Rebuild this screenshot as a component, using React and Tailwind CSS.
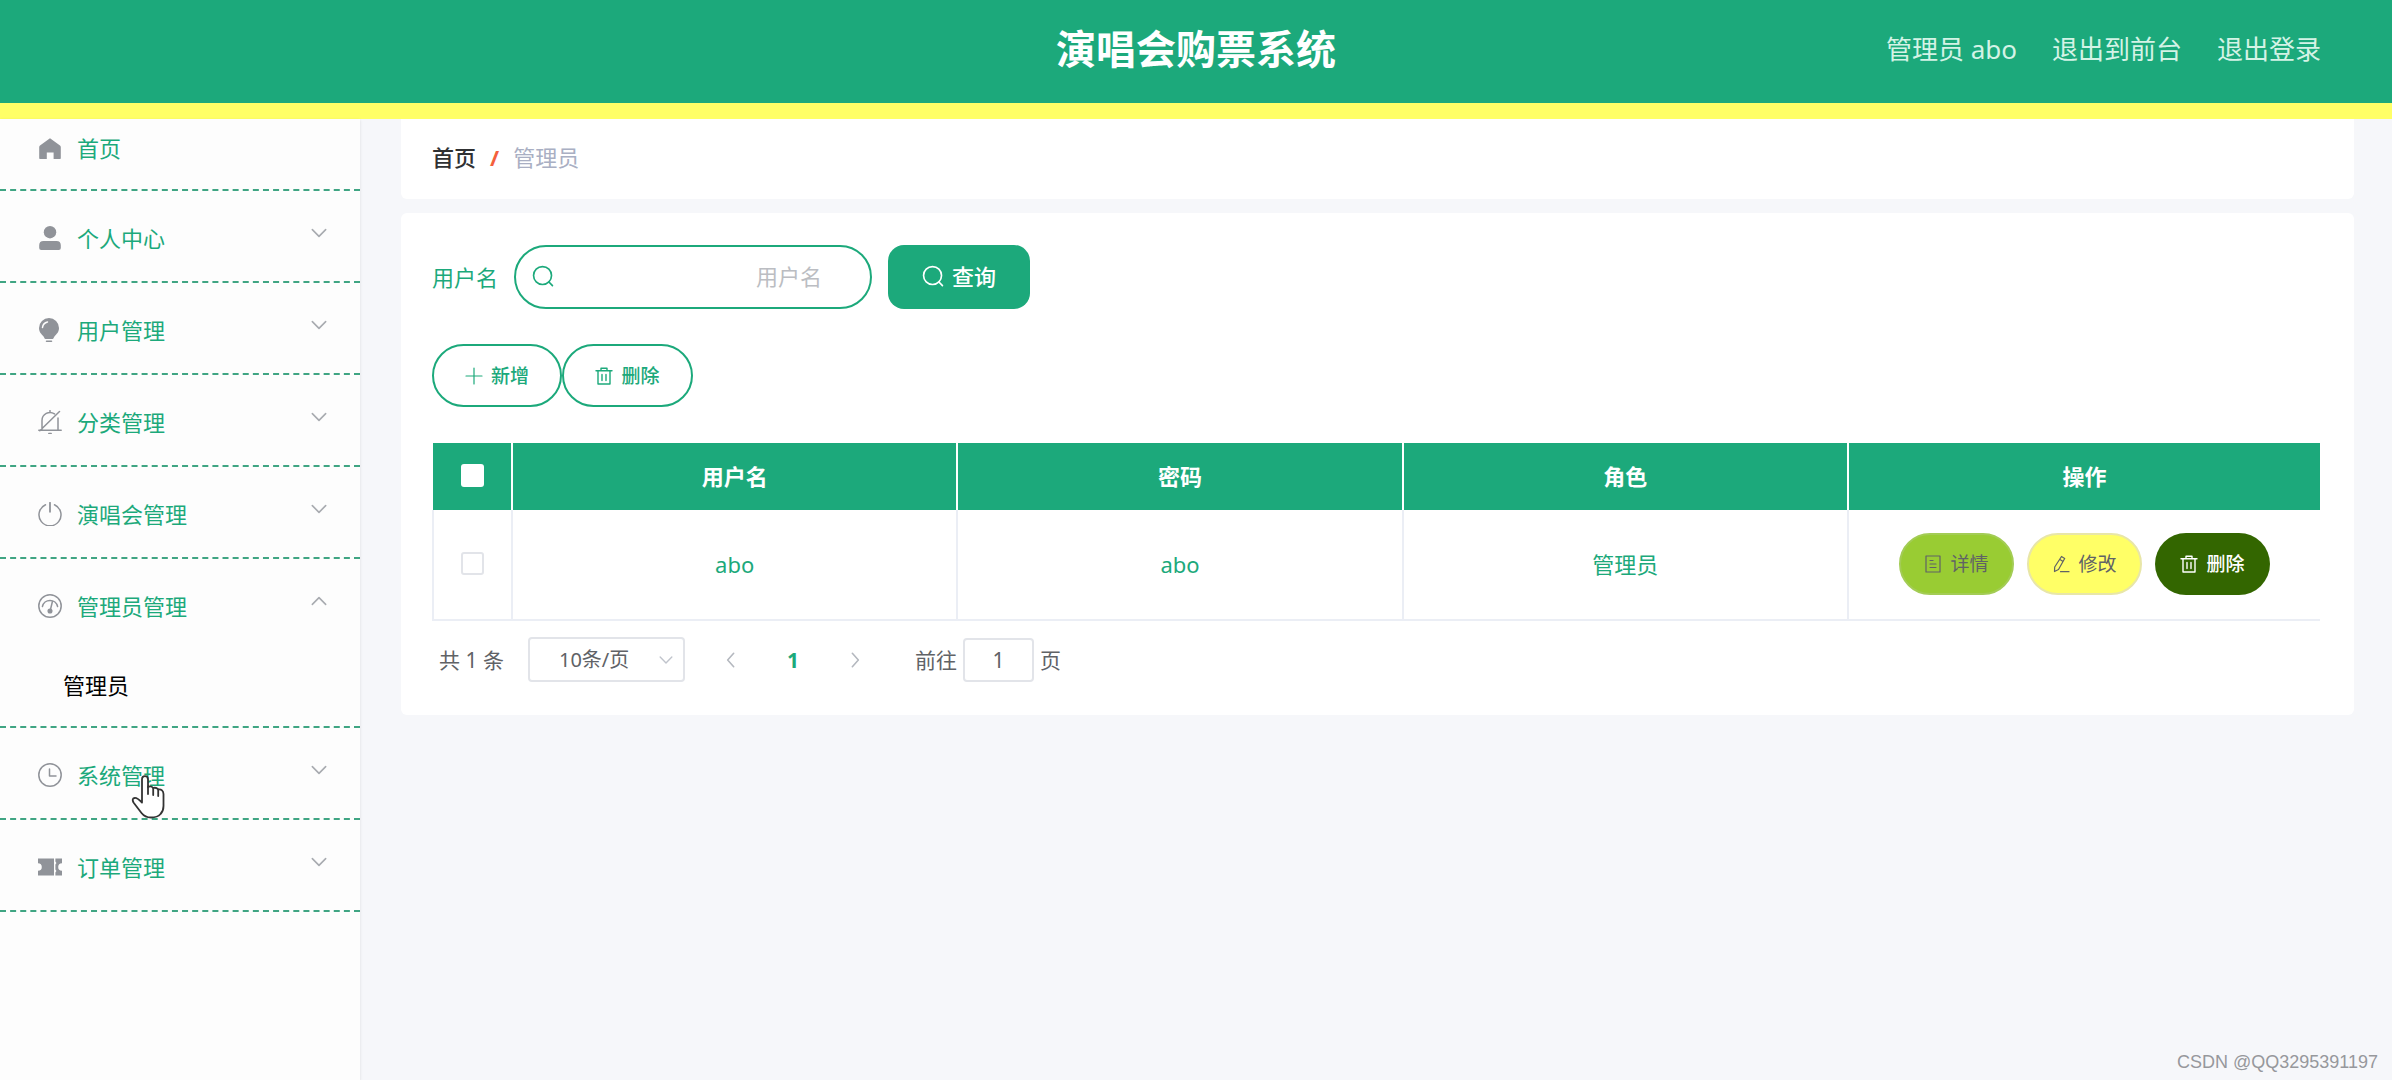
import { useState } from "react";

const stroke = {
  fill: "none",
  stroke: "currentColor",
  strokeLinecap: "round",
  strokeLinejoin: "round",
};

function HomeIcon() {
  return (
    <svg viewBox="0 0 24 24" className="w-6 h-6 shrink-0" fill="currentColor">
      <path d="M12 2.2 22 9.6q.8.6.8 1.6v11q0 .8-.8.8h-6.4v-6.400H8.800V23H2q-.8 0-.8-.8v-11q0-1 .8-1.600Z" />
    </svg>
  );
}

function UserIcon() {
  return (
    <svg viewBox="0 0 24 24" className="w-6 h-6 shrink-0" fill="currentColor">
      <circle cx="12" cy="6.2" r="6.2" />
      <path d="M5.5 15h13q4.300 0 4.300 4.300v2.700q0 2-2 2H3.200q-2 0-2-2v-2.700q0-4.300 4.300-4.300Z" />
    </svg>
  );
}

function BulbIcon() {
  return (
    <svg viewBox="0 0 24 24" className="w-6 h-6 shrink-0">
      <path
        fill="currentColor"
        d="M11 0a10 10 0 0 1 10 10c0 4.200-2.600 6.200-4.400 8.300-1 1.200-.9 2.700-2.100 2.700h-7c-1.200 0-1.100-1.500-2.100-2.700C3.600 16.200 1 14.200 1 10A10 10 0 0 1 11 0Z"
      />
      <path d="M4.500 9.500a6.500 6.500 0 0 1 5-5.500" {...stroke} stroke="#fdfdfd" strokeWidth="1.5" />
      <path d="M8.500 23.200h5" {...stroke} strokeWidth="1.5" />
    </svg>
  );
}

function BellOffIcon() {
  return (
    <svg viewBox="0 0 24 24" className="w-6 h-6 shrink-0" {...stroke} strokeWidth="1.5">
      <path d="M4 19V10.500a8 8 0 0 1 12.500-6.600M20 8V20M.8 20.200h22.400M1.800 20.800 21.500 1.500M12 .6v1.400M10.800 23.400h2.400" />
    </svg>
  );
}

function PowerIcon() {
  return (
    <svg viewBox="0 0 24 24" className="w-6 h-6 shrink-0" {...stroke} strokeWidth="1.5">
      <path d="M7.500 2.800A11 11 0 1 0 16.500 2.800" />
      <path d="M12 .8v9" strokeWidth="1.8" />
    </svg>
  );
}

function GaugeIcon() {
  return (
    <svg viewBox="0 0 24 24" className="w-6 h-6 shrink-0" {...stroke} strokeWidth="1.5">
      <circle cx="12" cy="12" r="11.2" />
      <path d="M4.400 12.500a7.800 7.800 0 0 1 15.200 0M12.600 15l1.700-7" />
      <circle cx="12" cy="17" r="1.800" fill="currentColor" />
    </svg>
  );
}

function ClockIcon() {
  return (
    <svg viewBox="0 0 24 24" className="w-6 h-6 shrink-0" {...stroke} strokeWidth="1.5">
      <circle cx="12" cy="12" r="11.2" />
      <path d="M11.500 6v7h6.500" />
    </svg>
  );
}

function TicketIcon() {
  return (
    <svg viewBox="0 0 24 24" className="w-6 h-6 shrink-0" fill="currentColor">
      <path d="M0 3.500h16v17H0v-4.700a3.800 3.800 0 0 0 0-7.600Z" />
      <path d="M17.400 3.500H24v4.700a3.800 3.800 0 0 0 0 7.600v4.700h-6.600v-3l1-1.500-1-1.500v-5l1-1.500-1-1.500Z" />
    </svg>
  );
}

function Chevron({ className, d = "m2 7 10 10L22 7" }) {
  return (
    <svg viewBox="0 0 24 24" className={className} {...stroke} strokeWidth="2.4">
      <path d={d} />
    </svg>
  );
}

function SearchIcon() {
  return (
    <svg viewBox="0 0 24 24" className="w-[22px] h-[22px] shrink-0" {...stroke} strokeWidth="1.8">
      <circle cx="11.5" cy="11.5" r="9.8" />
      <path d="m18.500 18.500 3.800 4" />
    </svg>
  );
}

function PlusIcon() {
  return (
    <svg viewBox="0 0 18 18" className="w-[18px] h-[18px] shrink-0" {...stroke} strokeWidth="1.2">
      <path d="M9 1v16M1 9h16" />
    </svg>
  );
}

function TrashIcon() {
  return (
    <svg viewBox="0 0 18 18" className="w-[18px] h-[18px] shrink-0" {...stroke} strokeWidth="1.4">
      <path d="M1 3.800h16M6 3.500V1.200h6v2.300M3 4v13h12V4M7 7.500v6M11 7.500v6" />
    </svg>
  );
}

function DetailIcon() {
  return (
    <svg viewBox="0 0 18 18" className="w-[18px] h-[18px] shrink-0" {...stroke} strokeWidth="1.2">
      <path d="M2 1h14v16H2ZM6 5.500h3M6 9h6M6 12.500h6" />
    </svg>
  );
}

function EditIcon() {
  return (
    <svg viewBox="0 0 18 18" className="w-[18px] h-[18px] shrink-0" {...stroke} strokeWidth="1.2">
      <path d="m9.500 1.500 3.200 2L6.500 14.500l-4 2 .2-4.500ZM8 4.500l3 2M8.500 16.700H17" />
    </svg>
  );
}

function HandCursor() {
  return (
    <svg
      viewBox="0 0 34 44"
      className="absolute left-[131px] top-[656px] w-[34px] h-[44px] pointer-events-none"
      fill="#fff"
      stroke="#333"
      strokeWidth="1.8"
      strokeLinejoin="round"
      strokeLinecap="round"
    >
      <path d="M11 26V4.500Q11 1.200 14 1.200T17 4.500V12q3-1.500 5.200 1 3-1 5 1.500 5-.5 5.300 4.500V31q0 5-3 8-3 3.500-9.500 3.500-6 0-9.500-4.500L2.500 27.500Q.5 23.500 3.500 23 6 22.500 11 27.500Z" />
      <path d="M17 12v7M22.200 13v7M27.200 14.500V21" fill="none" />
    </svg>
  );
}

const menu = [
  { name: "个人中心", icon: UserIcon },
  { name: "用户管理", icon: BulbIcon },
  { name: "分类管理", icon: BellOffIcon },
  { name: "演唱会管理", icon: PowerIcon },
  { name: "管理员管理", icon: GaugeIcon, children: ["管理员"] },
  { name: "系统管理", icon: ClockIcon },
  { name: "订单管理", icon: TicketIcon },
];

function Header() {
  return (
    <header className="grid grid-cols-[1fr_auto_1fr] h-[119px] pb-1.5 items-center bg-[#1ca97b] border-b-[16px] border-[#ffff66]">
      <h1 className="col-start-2 text-[40px] leading-[48px] font-bold text-white">
        演唱会购票系统
      </h1>
      <nav className="flex justify-end gap-[35px] pr-[71px] text-[26px] leading-8 text-[#d4f3e6]">
        <span>管理员 abo</span>
        <a href="#front">退出到前台</a>
        <a href="#logout">退出登录</a>
      </nav>
    </header>
  );
}

function Sidebar() {
  const [open, setOpen] = useState("管理员管理");

  return (
    <aside className="relative w-[360px] shrink-0 bg-[#fdfdfd] shadow-sm text-[22px] leading-8">
      <ul>
        <li className="border-b-2 border-dashed border-[#3fa583]">
          <a href="#home" className="flex items-center h-[70px] pb-3 pl-[38px] gap-[15px] text-[#909399]">
            <HomeIcon />
            <span className="text-[#1ca97b]">首页</span>
          </a>
        </li>
        {menu.map(({ name, icon: Icon, children }) => (
          <li key={name} className="border-b-2 border-dashed border-[#3fa583]">
            <button
              type="button"
              onClick={() => setOpen(open === name ? "" : name)}
              className="flex items-center w-full h-[90px] pt-[3px] pl-[38px] pr-[33px] gap-[15px] text-[#909399]"
            >
              <Icon />
              <span className="text-[#1ca97b]">{name}</span>
              <Chevron
                className="ml-auto mb-2.5 w-4 h-4 text-[#a8abb0]"
                d={open === name && children ? "m2 17 10-10 10 10" : "m2 7 10 10L22 7"}
              />
            </button>
            {open === name &&
              children?.map((child) => (
                <a key={child} href="#admin" className="flex items-center h-[77px] pb-1.5 pl-[63px] text-black">
                  {child}
                </a>
              ))}
          </li>
        ))}
      </ul>
      <HandCursor />
    </aside>
  );
}

function Pagination() {
  return (
    <div className="flex items-center mt-4 pl-[7px] text-[21px] leading-7 text-[#606266]">
      <span>共 1 条</span>
      <div className="relative ml-6">
        <select
          aria-label="每页条数"
          className="appearance-none w-[157px] h-[45px] pl-[29px] text-[20px] bg-white border-2 border-[#e2e4e9] rounded"
        >
          <option>10条/页</option>
        </select>
        <Chevron className="absolute right-3 top-4 w-3.5 h-3.5 text-[#c0c4cc] pointer-events-none" />
      </div>
      <button type="button" aria-label="上一页" className="ml-[38px] text-[#b4b8bf]">
        <Chevron className="w-4 h-4" d="M16 2 7 12l9 10" />
      </button>
      <button type="button" className="ml-[46px] w-4 font-bold text-[#1ca97b]">
        1
      </button>
      <button type="button" aria-label="下一页" className="ml-[46px] text-[#b4b8bf]">
        <Chevron className="w-4 h-4" d="m8 2 9 10-9 10" />
      </button>
      <label className="flex items-center gap-[6px] ml-[52px]">
        前往
        <input
          type="text"
          defaultValue="1"
          className="w-[71px] h-[44px] text-center bg-white border-2 border-[#e2e4e9] rounded"
        />
        页
      </label>
    </div>
  );
}

const pill = "flex items-center justify-center gap-2 rounded-full text-[19px] leading-6";

function UserTable() {
  const th = "pb-0.5 border-r-2 border-white last:border-r-0";
  const td = "pb-0.5 border-r-2 border-[#ebeef5] last:border-r-0";

  return (
    <table className="w-full mt-9 table-fixed text-[22px] leading-8 text-center text-[#1ca97b]">
      <colgroup>
        <col className="w-[79px]" />
        <col />
        <col />
        <col />
        <col className="w-[472px]" />
      </colgroup>
      <thead>
        <tr className="h-[67px] bg-[#1ca97b] text-white">
          <th className={th}>
            <input
              type="checkbox"
              aria-label="全选"
              className="block mx-auto appearance-none w-[23px] h-[23px] bg-white rounded-[3px]"
            />
          </th>
          <th className={th}>用户名</th>
          <th className={th}>密码</th>
          <th className={th}>角色</th>
          <th className={th}>操作</th>
        </tr>
      </thead>
      <tbody>
        <tr className="h-[110px] border-b-2 border-l-2 border-[#ebeef5]">
          <td className={td}>
            <input
              type="checkbox"
              aria-label="选择 abo"
              className="block mx-auto appearance-none w-[23px] h-[23px] bg-white border-2 border-[#e2e4e9] rounded-[3px]"
            />
          </td>
          <td className={td}>abo</td>
          <td className={td}>abo</td>
          <td className={td}>管理员</td>
          <td className={td}>
            <div className="flex justify-center gap-[13px]">
              <button type="button" className={`${pill} w-[115px] h-[62px] bg-[#99cc33] border-2 border-[#a3cc55] text-[#606266]`}>
                <DetailIcon />
                详情
              </button>
              <button type="button" className={`${pill} w-[115px] h-[62px] bg-[#ffff66] border-2 border-[#e8e6a8] text-[#606266]`}>
                <EditIcon />
                修改
              </button>
              <button type="button" className={`${pill} w-[115px] h-[62px] bg-[#336600] font-medium text-white`}>
                <TrashIcon />
                删除
              </button>
            </div>
          </td>
        </tr>
      </tbody>
    </table>
  );
}

function App() {
  return (
    <div className="relative flex flex-col min-h-screen bg-[#f6f7fa] font-['Noto_Sans','Noto_Sans_CJK_SC',sans-serif]">
      <Header />
      <div className="flex flex-1">
        <Sidebar />
        <main className="flex-1 min-w-0 pl-[41px] pr-[38px]">
          <nav className="flex items-center h-20 pb-1 pl-[31px] gap-3.5 bg-white rounded-b-md text-[22px] leading-8">
            <a href="#home" className="font-medium text-[#303133]">
              首页
            </a>
            <span className="font-bold text-[#f4603c]">/</span>
            <span className="text-[#a9afc3]">管理员</span>
          </nav>

          <section className="mt-3.5 pt-8 pb-[33px] pl-[31px] pr-[34px] bg-white rounded-md">
            <form className="flex items-center gap-4 text-[22px] leading-8" onSubmit={(e) => e.preventDefault()}>
              <label htmlFor="username" className="text-[#1ca97b]">
                用户名
              </label>
              <div className="flex items-center w-[358px] h-16 pl-4 pb-0.5 pr-[48px] border-2 border-[#1ca97b] rounded-full text-[#1ca97b]">
                <SearchIcon />
                <input
                  id="username"
                  type="text"
                  placeholder="用户名"
                  className="flex-1 min-w-0 text-right outline-none placeholder:text-[#bbbdc2]"
                />
              </div>
              <button
                type="submit"
                className="flex items-center justify-center gap-2 w-[142px] h-16 pb-0.5 bg-[#1ca97b] rounded-2xl font-medium text-white"
              >
                <SearchIcon />
                查询
              </button>
            </form>

            <div className="flex mt-[35px] font-medium text-[#1ca97b]">
              <button type="button" className={`${pill} w-[130px] h-[63px] border-2 border-[#1ca97b]`}>
                <PlusIcon />
                新增
              </button>
              <button type="button" className={`${pill} w-[131px] h-[63px] border-2 border-[#1ca97b]`}>
                <TrashIcon />
                删除
              </button>
            </div>

            <UserTable />
            <Pagination />
          </section>
        </main>
      </div>
      <p className="absolute right-3.5 bottom-1.5 font-['Liberation_Sans',sans-serif] text-[18px] leading-6 text-[#96989c]">
        CSDN @QQ3295391197
      </p>
    </div>
  );
}

export default App;
